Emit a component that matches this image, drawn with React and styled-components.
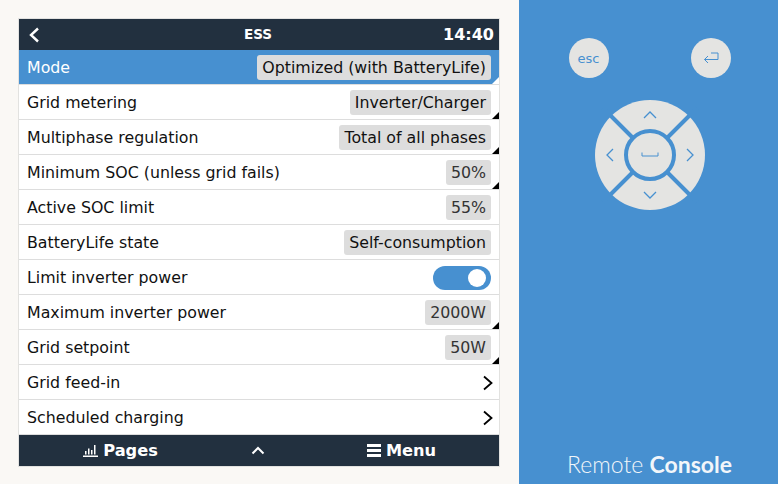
import styled, { createGlobalStyle } from "styled-components"

const GlobalStyle = createGlobalStyle`
    html, body {
        margin: 0;
        padding: 0;
        background: #4790d0;
    }
`

const rows = [
    { label: "Mode", value: "Optimized (with BatteryLife)", corner: true, active: true },
    { label: "Grid metering", value: "Inverter/Charger", corner: true },
    { label: "Multiphase regulation", value: "Total of all phases", corner: true },
    { label: "Minimum SOC (unless grid fails)", value: "50%", corner: true, soft: true },
    { label: "Active SOC limit", value: "55%", soft: true },
    { label: "BatteryLife state", value: "Self-consumption" },
    { label: "Limit inverter power", toggle: true },
    { label: "Maximum inverter power", value: "2000W", corner: true, soft: true },
    { label: "Grid setpoint", value: "50W", corner: true, soft: true },
    { label: "Grid feed-in", arrow: true },
    { label: "Scheduled charging", arrow: true },
]

export default function App() {
    return (
        <Page>
            <GlobalStyle />
            <Left>
                <Screen>
                    <Header>
                        <BackBtn>
                            <svg width="12" height="16" viewBox="0 0 12 16" fill="none" stroke="#fff" strokeWidth="2.4">
                                <path d="M10 1.5 L3 8 L10 14.5" />
                            </svg>
                        </BackBtn>
                        <HeaderTitle>ESS</HeaderTitle>
                        <Clock>14:40</Clock>
                    </Header>
                    <List>
                        {rows.map((r) => (
                            <Row key={r.label} $active={r.active}>
                                <span>{r.label}</span>
                                {r.value && <Value $soft={r.soft}>{r.value}</Value>}
                                {r.toggle && <Toggle />}
                                {r.arrow && (
                                    <Arrow>
                                        <svg width="12" height="16" viewBox="0 0 12 16" fill="none" stroke="#000" strokeWidth="1.8">
                                            <path d="M2 1.5 L9.5 8 L2 14.5" />
                                        </svg>
                                    </Arrow>
                                )}
                                {r.corner && <Corner $active={r.active} />}
                            </Row>
                        ))}
                    </List>
                    <Footer>
                        <FootItem>
                            <svg width="15" height="13" viewBox="0 0 15 13" fill="#fff">
                                <rect x="0" y="11.5" width="15" height="1.5" />
                                <rect x="2" y="7" width="1.5" height="3.5" />
                                <rect x="5" y="4.5" width="1.5" height="6" />
                                <rect x="8" y="6" width="1.5" height="4.5" />
                                <rect x="11" y="1" width="1.5" height="9.5" />
                            </svg>
                            Pages
                        </FootItem>
                        <FootChevron>
                            <svg width="14" height="9" viewBox="0 0 14 9" fill="none" stroke="#fff" strokeWidth="2">
                                <path d="M1.5 7.5 L7 2 L12.5 7.5" />
                            </svg>
                        </FootChevron>
                        <FootItem>
                            <svg width="14" height="13" viewBox="0 0 14 13" fill="#fff">
                                <rect x="0" y="0" width="14" height="3" />
                                <rect x="0" y="5" width="14" height="3" />
                                <rect x="0" y="10" width="14" height="3" />
                            </svg>
                            Menu
                        </FootItem>
                    </Footer>
                </Screen>
            </Left>
            <Right>
                <TopKeys>
                    <RoundKey>esc</RoundKey>
                    <RoundKey>
                        <svg width="16" height="13" viewBox="0 0 16 13" fill="none" stroke="#4790d0" strokeWidth="1">
                            <path d="M8 1 H15 V7.5 H1.5 M5 4 L1.5 7.5 L5 11" />
                        </svg>
                    </RoundKey>
                </TopKeys>
                <Pad>
                    <svg width="110" height="110" viewBox="0 0 110 110">
                        <circle cx="55" cy="55" r="55" fill="#e4e4e2" />
                        <path d="M8 8 L102 102 M102 8 L8 102" stroke="#4790d0" strokeWidth="4" />
                        <circle cx="55" cy="55" r="24" fill="#e4e4e2" stroke="#4790d0" strokeWidth="4" />
                        <g fill="none" stroke="#4790d0" strokeWidth="1.3">
                            <path d="M49 18 L55 12 L61 18" />
                            <path d="M49 92 L55 98 L61 92" />
                            <path d="M18 49 L12 55 L18 61" />
                            <path d="M92 49 L98 55 L92 61" />
                            <path d="M47 52.5 V56 H63 V52.5" strokeWidth="1" />
                        </g>
                    </svg>
                </Pad>
                <Brand>
                    Remote <b>Console</b>
                </Brand>
            </Right>
        </Page>
    )
}

const Page = styled.div`
    display: flex;
    width: 778px;
    height: 484px;
    overflow: hidden;
    font-family: "DejaVu Sans", sans-serif;
`

const Left = styled.div`
    width: 519px;
    flex: none;
    box-sizing: border-box;
    padding: 18px;
    background: #faf8f5;
`

const Screen = styled.div`
    width: 482px;
    box-sizing: border-box;
    display: flex;
    flex-direction: column;
    border: 1px solid #e2e2e0;
`

const Header = styled.div`
    height: 31px;
    display: flex;
    align-items: center;
    justify-content: space-between;
    position: relative;
    background: #22303f;
    color: #fff;
    font-weight: 700;
    padding: 0 5px 0 9px;
`

const BackBtn = styled.div`
    display: flex;
`

const HeaderTitle = styled.div`
    font-size: 13.5px;
    position: absolute;
    left: 225px;
    top: 7px;
`

const Clock = styled.div`
    font-size: 16px;
`

const List = styled.div`
    background: #fff;
`

const Row = styled.div`
    height: 35px;
    box-sizing: border-box;
    position: relative;
    display: flex;
    align-items: center;
    justify-content: space-between;
    padding: 1px 8px 0;
    font-size: 15.8px;
    color: ${(p) => (p.$active ? "#fff" : "#111")};
    background: ${(p) => (p.$active ? "#4790d0" : "#fff")};
    border-bottom: 1px solid #ddd;
`

const Value = styled.div`
    height: 25px;
    line-height: 25px;
    padding: 0 5px;
    border-radius: 3px;
    background: #ddd;
    color: ${(p) => (p.$soft ? "#333" : "#111")};
`

const Corner = styled.div`
    position: absolute;
    right: 0;
    bottom: 0;
    width: 0;
    height: 0;
    border-left: 7px solid transparent;
    border-bottom: 7px solid ${(p) => (p.$active ? "#fff" : "#000")};
`

const Toggle = styled.div`
    width: 58px;
    height: 24px;
    border-radius: 12px;
    background: #4790d0;
    position: relative;

    &::after {
        content: "";
        position: absolute;
        right: 5px;
        top: 3px;
        width: 18px;
        height: 18px;
        border-radius: 50%;
        background: #fff;
    }
`

const Arrow = styled.div`
    display: flex;
    margin-right: -3px;
`

const Footer = styled.div`
    height: 31px;
    display: grid;
    grid-template-columns: 203px 72px 1fr;
    align-items: center;
    justify-items: center;
    background: #22303f;
    color: #fff;
    font-size: 16.2px;
    font-weight: 700;
`

const FootItem = styled.div`
    display: flex;
    align-items: center;
    gap: 5px;

    &:last-child {
        justify-self: start;
        margin-left: 73px;
    }
`

const FootChevron = styled.div`
    display: flex;
`

const Right = styled.div`
    flex: 1;
    box-sizing: border-box;
    padding-left: 2px;
    background: #4790d0;
    display: flex;
    flex-direction: column;
    align-items: center;
`

const TopKeys = styled.div`
    width: 162px;
    margin-top: 38px;
    display: flex;
    justify-content: space-between;
`

const RoundKey = styled.div`
    width: 40px;
    height: 40px;
    border-radius: 50%;
    background: #e4e4e2;
    color: #4790d0;
    font-size: 13px;
    display: flex;
    align-items: center;
    justify-content: center;
`

const Pad = styled.div`
    margin-top: 22px;
    display: flex;
`

const Brand = styled.div`
    margin-top: auto;
    margin-bottom: 6px;
    font-family: Lato, sans-serif;
    font-weight: 300;
    font-size: 23px;
    color: #f2f6fa;

    b {
        font-weight: 700;
    }
`
